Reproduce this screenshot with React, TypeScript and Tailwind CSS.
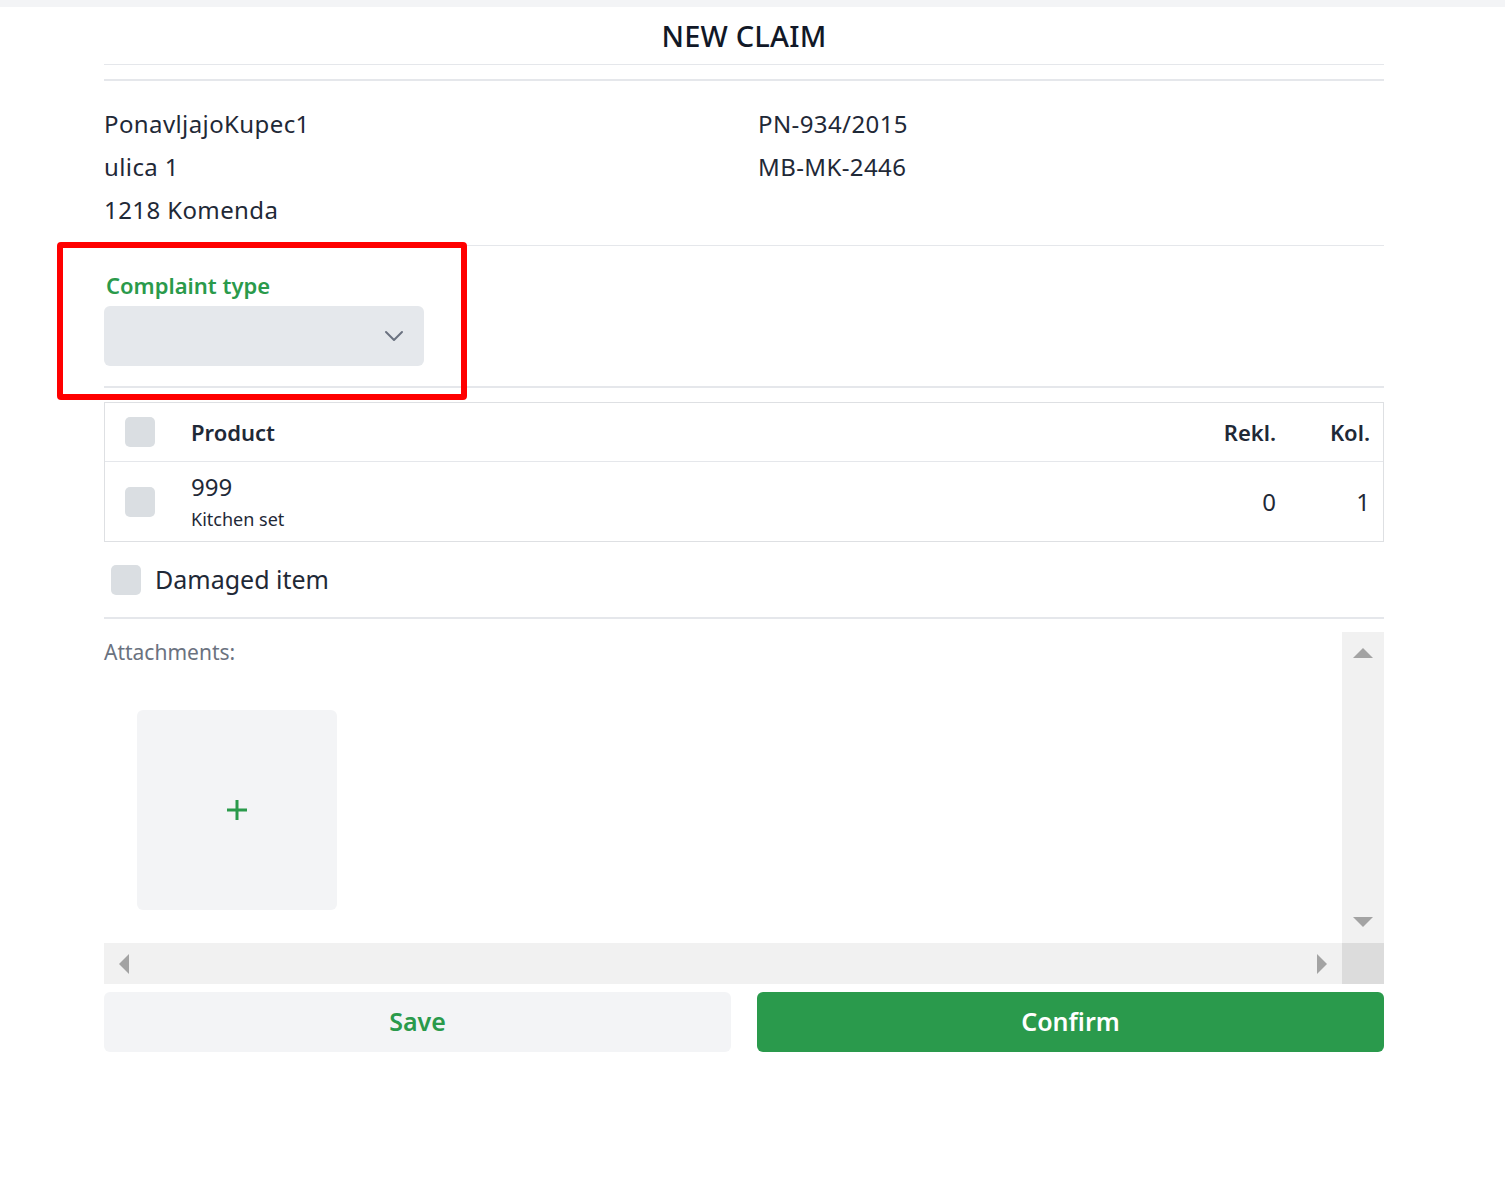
import React from "react";

function Box({ className = "" }: { className?: string }) {
  return <div className={`w-[30px] h-[30px] rounded-[5px] bg-[#dadee2] ${className}`} />;
}

export default function App() {
  return (
    <div className="w-[1505px] min-h-[1201px] bg-white text-[#1f2937]" style={{ fontFamily: '"Noto Sans", "Open Sans", sans-serif' }}>
      <div className="h-[7px] bg-[#f3f4f6]" />
      <div className="w-[1488px]">
        <div className="relative mx-auto w-[1280px]">
          <div className="h-[58px] border-b border-[#e5e7eb] flex items-center justify-center">
            <h1 className="text-[29px] font-medium text-[#111827] tracking-[0.2px]">NEW CLAIM</h1>
          </div>
          <div className="mt-[14px] h-[2px] bg-[#e5e7eb]" />
          <div className="grid grid-cols-2 gap-x-[28px] pt-[21px] pb-[14px] border-b border-[#e5e7eb] text-[24px] leading-[43px] tracking-[0.4px] text-[#1f2937]">
            <div>
              <div>PonavljajoKupec1</div>
              <div>ulica 1</div>
              <div>1218 Komenda</div>
            </div>
            <div>
              <div>PN-934/2015</div>
              <div>MB-MK-2446</div>
            </div>
          </div>
          <div className="pt-[24px] pb-[20px] border-b-2 border-[#e5e7eb]">
            <div className="text-[22px] font-semibold text-[#2a9a4b] leading-[30px] pl-[2px]">Complaint type</div>
            <div className="mt-[6px] w-[320px] h-[60px] rounded-[6px] bg-[#e5e8ec] flex items-center justify-end pr-[20px]">
              <svg width="20" height="12" viewBox="0 0 20 12" fill="none">
                <path d="M2 2l8 8 8-8" stroke="#6b7280" strokeWidth="2" strokeLinecap="round" strokeLinejoin="round" />
              </svg>
            </div>
          </div>
          <div className="mt-[14px] border border-[#dee0e3]">
            <div className="h-[59px] flex items-center border-b border-[#e5e7eb]">
              <Box className="ml-[20px]" />
              <div className="ml-[36px] flex-1 text-[22px] font-semibold text-[#1f2937]">Product</div>
              <div className="w-[120px] pr-[14px] text-right text-[22px] font-semibold">Rekl.</div>
              <div className="w-[93px] pr-[13px] text-right text-[22px] font-semibold">Kol.</div>
            </div>
            <div className="h-[79px] flex items-center">
              <Box className="ml-[20px]" />
              <div className="ml-[36px] flex-1">
                <div className="text-[24px] leading-[32px]">999</div>
                <div className="text-[18px] leading-[26px] mt-[3px]">Kitchen set</div>
              </div>
              <div className="w-[120px] pr-[14px] text-right text-[24px]">0</div>
              <div className="w-[93px] pr-[13px] text-right text-[24px]">1</div>
            </div>
          </div>
          <div className="h-[77px] flex items-center border-b-2 border-[#e5e7eb]">
            <Box className="ml-[7px]" />
            <div className="ml-[14px] text-[25px] text-[#1f2937]">Damaged item</div>
          </div>
          <div className="mt-[13px] h-[352px] flex flex-col">
            <div className="flex flex-1">
              <div className="flex-1">
                <div className="pt-[6px] text-[21px] text-[#6b7280] leading-[28px]">Attachments:</div>
                <div className="mt-[44px] ml-[33px] w-[200px] h-[200px] rounded-[6px] bg-[#f3f4f6] flex items-center justify-center">
                  <svg width="22" height="22" viewBox="0 0 22 22">
                    <path d="M11 1v20M1 11h20" stroke="#2a9a4b" strokeWidth="3" />
                  </svg>
                </div>
              </div>
              <div className="w-[42px] bg-[#f1f1f1] flex flex-col items-center justify-between py-[16px]">
                <svg width="20" height="10" viewBox="0 0 20 10"><path d="M0 10L10 0l10 10z" fill="#a3a3a3" /></svg>
                <svg width="20" height="10" viewBox="0 0 20 10"><path d="M0 0l10 10L20 0z" fill="#a3a3a3" /></svg>
              </div>
            </div>
            <div className="h-[41px] flex">
              <div className="flex-1 bg-[#f1f1f1] flex items-center justify-between px-[15px]">
                <svg width="10" height="20" viewBox="0 0 10 20"><path d="M10 0L0 10l10 10z" fill="#a3a3a3" /></svg>
                <svg width="10" height="20" viewBox="0 0 10 20"><path d="M0 0l10 10L0 20z" fill="#a3a3a3" /></svg>
              </div>
              <div className="w-[42px] bg-[#dcdcdc]" />
            </div>
          </div>
          <div className="mt-[8px] grid grid-cols-2 gap-[26px]">
            <button className="h-[60px] rounded-[6px] bg-[#f3f4f6] text-[25px] font-semibold text-[#2a9a4b]">Save</button>
            <button className="h-[60px] rounded-[6px] bg-[#2a9a4c] text-[25px] font-semibold text-white">Confirm</button>
          </div>
          <div className="absolute left-[-47px] top-[235px] w-[410px] h-[158px] border-[6px] border-[#ff0000] rounded-[4px] pointer-events-none" />
        </div>
      </div>
    </div>
  );
}
